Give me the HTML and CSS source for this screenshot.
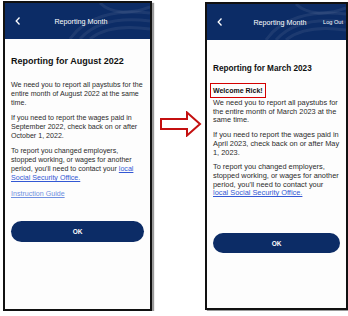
FILE: index.html
```html
<!DOCTYPE html>
<html lang="en">
<head>
  <meta charset="UTF-8" />
  <title>Reporting Month</title>
  <link rel="stylesheet" href="styles.css">
</head>
<body>
  <div class="stage">
    <div class="phone phone-old">
      <div class="topbar">
        <svg class="back" width="6" height="8" viewBox="0 0 6 8"><polyline points="4.5,0.5 1.2,4 4.5,7.5" /></svg>
        <span class="bar-title">Reporting Month</span>
        <span class="logout"></span>
        <svg class="seal" width="90" height="36" viewBox="0 0 90 36">
          <path d="M10 36 C 25 14, 55 6, 90 10" />
          <path d="M20 36 C 34 20, 58 14, 90 18" />
          <path d="M30 36 C 42 26, 62 22, 90 26" />
          <path d="M40 0 C 50 10, 70 12, 90 4" />
        </svg>
      </div>
      <div class="content">
        <h2>Reporting for August 2022</h2>
        <p>We need you to report all paystubs for the entire month of August 2022 at the same time.</p>
        <p>If you need to report the wages paid in September 2022, check back on or after October 1, 2022.</p>
        <p>To report you changed employers, stopped working, or wages for another period, you'll need to contact your <a href="#">local Social Security Office.</a></p>
        <p class="guide"><a href="#">Instruction Guide</a></p>
        <button class="ok">OK</button>
      </div>
    </div>

    <svg class="arrow" width="42" height="26" viewBox="0 0 42 26">
      <polygon points="1,8 27,8 27,1.5 40,13 27,24.5 27,18 1,18" />
    </svg>

    <div class="phone phone-new">
      <div class="topbar">
        <svg class="back" width="6" height="8" viewBox="0 0 6 8"><polyline points="4.5,0.5 1.2,4 4.5,7.5" /></svg>
        <span class="bar-title">Reporting Month</span>
        <span class="logout">Log Out</span>
        <svg class="seal" width="90" height="36" viewBox="0 0 90 36">
          <path d="M10 36 C 25 14, 55 6, 90 10" />
          <path d="M20 36 C 34 20, 58 14, 90 18" />
          <path d="M30 36 C 42 26, 62 22, 90 26" />
          <path d="M40 0 C 50 10, 70 12, 90 4" />
        </svg>
      </div>
      <div class="content">
        <h2>Reporting for March 2023</h2>
        <div class="welcome">Welcome Rick!</div>
        <p>We need you to report all paystubs for the entire month of March 2023 at the same time.</p>
        <p>If you need to report the wages paid in April 2023, check back on or after May 1, 2023.</p>
        <p>To report you changed employers, stopped working, or wages for another period, you'll need to contact your <a href="#">local Social Security Office.</a></p>
        <button class="ok">OK</button>
      </div>
    </div>
  </div>
</body>
</html>
```

FILE: styles.css
```css
body {
  margin: 0;
  background: #fff;
  font-family: "Liberation Sans", Arial, sans-serif;
  color: #2b2b2b;
}
.stage {
  display: flex;
  align-items: flex-start;
  padding: 1px 0 0 3px;
}
.phone {
  box-sizing: border-box;
  border: 2px solid #111;
  background: #fdfdfd;
  box-shadow: 2px 2px 1px #9a9a9a;
  overflow: hidden;
}
.phone-old {
  width: 149px;
  height: 310px;
}
.phone-new {
  width: 143px;
  height: 308px;
  margin-top: 1px;
  margin-left: 3px;
}
.topbar {
  position: relative;
  height: 36px;
  background: #0c2c66;
  display: grid;
  grid-template-columns: 1fr auto 1fr;
  align-items: center;
  padding: 0 3px 0 10px;
  color: #fff;
}
.back {
  fill: none;
  stroke: #fff;
  stroke-width: 1.3;
}
.bar-title {
  font-size: 7.2px;
  position: relative;
  z-index: 1;
}
.logout {
  justify-self: end;
  font-size: 5.6px;
  position: relative;
  z-index: 1;
}
.seal {
  position: absolute;
  right: 0;
  top: 0;
  fill: none;
  stroke: rgba(255, 255, 255, 0.07);
  stroke-width: 3;
}
.content {
  padding: 0 6px;
}
h2 {
  margin: 0;
  color: #111;
  font-weight: bold;
}
p {
  margin: 0;
}
a {
  color: #3358d4;
}
.phone-old h2 {
  font-size: 9px;
  line-height: 11px;
  margin-top: 17px;
  margin-bottom: 14px;
}
.phone-old p {
  font-size: 7.1px;
  line-height: 9px;
  margin-bottom: 6px;
}
.phone-old .guide {
  margin-top: 7px;
}
.guide a {
  color: #7090e0;
}
.phone-new h2 {
  font-size: 8.2px;
  line-height: 10px;
  margin-top: 24px;
  margin-bottom: 9px;
}
.welcome {
  width: fit-content;
  border: 1.5px solid #d40000;
  padding: 2.5px 2px;
  font-size: 7px;
  line-height: 8px;
  font-weight: bold;
  color: #111;
  margin-left: -3px;
  margin-bottom: 1px;
}
.phone-new p {
  font-size: 7.4px;
  line-height: 8.7px;
  margin-bottom: 6px;
}
.ok {
  display: block;
  width: 100%;
  border: none;
  border-radius: 11px;
  background: #0c2c66;
  color: #fff;
  font-family: inherit;
  font-size: 6.5px;
  font-weight: bold;
  cursor: pointer;
}
.phone-old .ok {
  height: 21px;
  margin-top: 22px;
}
.phone-new .ok {
  height: 20px;
  margin-top: 35px;
}
.arrow {
  margin: 110px 0 0 8px;
  fill: #fff;
  stroke: #c41010;
  stroke-width: 2;
}
```
